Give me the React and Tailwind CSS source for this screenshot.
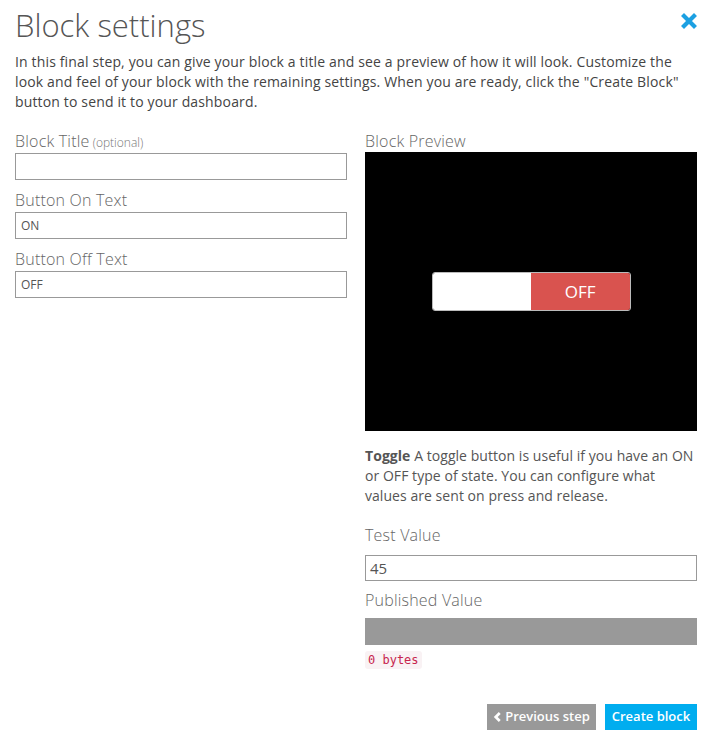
import React from "react";

function Label({ children }) {
  return (
    <div className="h-[20px] text-[16px] leading-[20px] text-[#666] font-light tracking-[0.2px]">{children}</div>
  );
}

function Field({ label, extra, value }) {
  return (
    <div>
      <Label>
        {label}
        {extra && <span className="text-[12px] text-[#777] tracking-normal"> {extra}</span>}
      </Label>
      <div className="mt-[2px] h-[27px] border border-[#999] bg-white flex items-center pl-[5px] text-[12px] text-[#555]">
        {value}
      </div>
    </div>
  );
}

export default function App() {
  return (
    <div
      className="w-[710px] h-[747px] bg-white relative text-[#555]"
      style={{ fontFamily: "'Open Sans', Lato, sans-serif" }}
    >
      <button className="absolute left-[681px] top-[13px] w-[16px] h-[16px]">
        <svg viewBox="0 0 16 16" width="16" height="16">
          <path d="M3 3 L13 13 M13 3 L3 13" stroke="#1ca0e2" strokeWidth="4.2" strokeLinecap="square" />
        </svg>
      </button>
      <div className="pl-[15px] pr-[13px] pt-[8px]">
        <h1 className="h-[34px] text-[31px] leading-[34px] font-light text-[#555]">Block settings</h1>
        <p className="mt-[10px] text-[14px] leading-[20px] text-[#444] tracking-[0.15px]">
          In this final step, you can give your block a title and see a preview of how it will look. Customize the look and feel of your block with the remaining settings. When you are ready, click the "Create Block" button to send it to your dashboard.
        </p>
        <div className="mt-[19px] flex gap-[18px]">
          <div className="w-[332px] flex flex-col gap-[10px]">
            <Field label="Block Title" extra="(optional)" value="" />
            <Field label="Button On Text" value="ON" />
            <Field label="Button Off Text" value="OFF" />
          </div>
          <div className="w-[332px] flex flex-col">
            <Label>Block Preview</Label>
            <div className="mt-[1px] h-[279px] bg-black flex items-center justify-center">
              <div className="w-[199px] h-[39px] rounded-[3px] border border-[#bbb] overflow-hidden flex">
                <div className="flex-1 bg-white" />
                <div className="flex-1 bg-[#d9534f] text-white text-[17px] flex items-center justify-center">OFF</div>
              </div>
            </div>
            <p className="mt-[15px] text-[14px] leading-[20px] text-[#555] tracking-[0.05px]">
              <strong className="font-bold text-[#555]">Toggle </strong>A toggle button is useful if you have an ON or OFF type of state. You can configure what values are sent on press and release.
            </p>
            <div className="mt-[19px]"><Label>Test Value</Label></div>
            <div className="mt-[10px] h-[26px] border border-[#999] flex items-center pl-[4px] text-[15px] text-[#555]">45</div>
            <div className="mt-[9px]"><Label>Published Value</Label></div>
            <div className="mt-[8px] h-[27px] bg-[#999]" />
            <div className="mt-[6px] flex">
              <code
                className="h-[18px] leading-[18px] px-[3px] rounded-[3px] bg-[#f9f2f4] text-[#c7254e] text-[12px]"
                style={{ fontFamily: "'DejaVu Sans Mono', monospace" }}
              >
                0 bytes
              </code>
            </div>
          </div>
        </div>
        <div className="mt-[35px] flex justify-end gap-[9px]">
          <button className="w-[109px] h-[26px] bg-[#999] text-white text-[13px] font-semibold flex items-center justify-center gap-[3px]">
            <svg viewBox="0 0 10 12" width="9" height="12">
              <path d="M7.5 1.5 L3 6 L7.5 10.5" stroke="white" strokeWidth="3" fill="none" />
            </svg>
            Previous step
          </button>
          <button className="w-[92px] h-[26px] bg-[#00adef] text-white text-[13px] font-semibold flex items-center justify-center">
            Create block
          </button>
        </div>
      </div>
    </div>
  );
}
